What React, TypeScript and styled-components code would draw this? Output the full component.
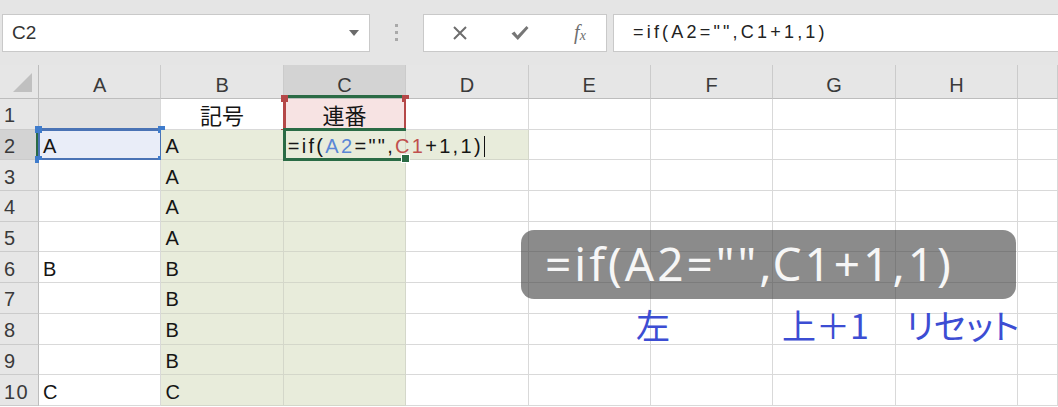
import styled, { createGlobalStyle } from 'styled-components';

const GlobalStyle = createGlobalStyle`
  html, body {
    margin: 0;
    padding: 0;
    background: #ffffff;
  }
  body {
    font-family: 'Liberation Sans', 'Noto Sans CJK JP', sans-serif;
  }
`;

const COLS = ['A', 'B', 'C', 'D', 'E', 'F', 'G', 'H', ''];
const SELECTED_COL = 'C';
const SELECTED_ROW = 2;

type Fill = 'none' | 'grey' | 'green' | 'blue' | 'pink';

const FILLS: Record<Fill, string> = {
  none: '#ffffff',
  grey: '#e2e2e2',
  green: '#e8ecdb',
  blue: '#e9edf8',
  pink: '#f7e3e3',
};

interface CellData {
  text?: string;
  fill?: Fill;
  big?: boolean;
  mark?: 'ref-blue' | 'ref-red' | 'active';
}

// sheet contents, keyed by "col+row"
const sheet: Record<string, CellData> = {
  A1: { fill: 'grey' },
  B1: { text: '記号', big: true },
  C1: { text: '連番', big: true, fill: 'pink', mark: 'ref-red' },
  A2: { text: 'A', fill: 'blue', mark: 'ref-blue' },
  B2: { text: 'A', fill: 'green' },
  C2: { fill: 'green', mark: 'active' },
  D2: { fill: 'green' },
  B3: { text: 'A' },
  B4: { text: 'A' },
  B5: { text: 'A' },
  A6: { text: 'B' },
  B6: { text: 'B' },
  B7: { text: 'B' },
  B8: { text: 'B' },
  B9: { text: 'B' },
  A10: { text: 'C' },
  B10: { text: 'C' },
};

const cellAt = (col: string, row: number): CellData => {
  const data = sheet[`${col}${row}`] ?? {};
  if ((col === 'B' || col === 'C') && row >= 2 && !data.fill) {
    return { ...data, fill: 'green' };
  }
  return data;
};

const App = () => {
  const rows = Array.from({ length: 10 }, (_, i) => i + 1);

  return (
    <>
      <GlobalStyle />
      <FrameS>
        <FormulaBarS>
          <NameBoxS>
            C2
            <CaretS />
          </NameBoxS>
          <GripS>
            <i />
            <i />
            <i />
          </GripS>
          <ButtonGroupS>
            <IconSlotS>
              <svg width='16' height='16' viewBox='0 0 16 16'>
                <path d='M2 2 L14 14 M14 2 L2 14' stroke='#6d6d6d' strokeWidth='2' fill='none' />
              </svg>
            </IconSlotS>
            <IconSlotS>
              <svg width='20' height='18' viewBox='0 0 20 18'>
                <path
                  d='M1.5 9.5 L4.5 7.5 L7.5 11.5 L16.5 2 L18.5 4 L7.8 16 Z'
                  fill='#767676'
                />
              </svg>
            </IconSlotS>
            <IconSlotS>
              <FxS>
                f<sub>x</sub>
              </FxS>
            </IconSlotS>
          </ButtonGroupS>
          <FormulaBoxS>=if(A2="",C1+1,1)</FormulaBoxS>
        </FormulaBarS>

        <GridS>
          <CornerS>
            <TriangleS />
          </CornerS>
          {COLS.map((c, i) => (
            <ColHeaderS key={`h${i}`} $selected={c === SELECTED_COL}>
              {c}
            </ColHeaderS>
          ))}

          {rows.map((r) => (
            <RowFragment key={r} row={r} />
          ))}
        </GridS>

        <BubbleS>=if(A2="",C1+1,1)</BubbleS>
        <NoteS $left={636}>左</NoteS>
        <NoteS $left={782}>上＋1</NoteS>
        <NoteS $left={906}>リセット</NoteS>
      </FrameS>
    </>
  );
};

export default App;

const RowFragment = ({ row }: { row: number }) => (
  <>
    <RowHeaderS $selected={row === SELECTED_ROW}>{row}</RowHeaderS>
    {COLS.map((col, i) => {
      const data = col ? cellAt(col, row) : {};
      return (
        <CellS
          key={`${row}-${i}`}
          $fill={data.fill ?? 'none'}
          $big={!!data.big}
          $editing={data.mark === 'active'}
        >
          {data.mark === 'active' ? <EditingText /> : data.text}
          {data.mark === 'ref-blue' && (
            <BlueRefS>
              <HandleS $c='#3f7ccc' $x='left' $y='top' />
              <HandleS $c='#3f7ccc' $x='right' $y='top' />
              <HandleS $c='#3f7ccc' $x='left' $y='bottom' />
              <HandleS $c='#3f7ccc' $x='right' $y='bottom' />
            </BlueRefS>
          )}
          {data.mark === 'ref-red' && (
            <RedRefS>
              <HandleS $c='#b54848' $x='left' $y='top' />
              <HandleS $c='#b54848' $x='right' $y='top' />
              <HandleS $c='#b54848' $x='left' $y='bottom' />
              <HandleS $c='#b54848' $x='right' $y='bottom' />
            </RedRefS>
          )}
          {data.mark === 'active' && (
            <ActiveS>
              <FillHandleS />
            </ActiveS>
          )}
        </CellS>
      );
    })}
  </>
);

const EditingText = () => (
  <EditTextS>
    =if(<RefS $c='#5a87d6'>A2</RefS>="",<RefS $c='#c0504d'>C1</RefS>+1,1)
    <CursorS />
  </EditTextS>
);

const FrameS = styled.div`
  position: relative;
  width: 1058px;
  height: 407px;
  overflow: hidden;
  background: #ffffff;
`;

const FormulaBarS = styled.div`
  display: flex;
  align-items: center;
  height: 65px;
  padding-left: 2px;
  box-sizing: border-box;
  background: #e5e5e5;
`;

const NameBoxS = styled.div`
  display: flex;
  align-items: center;
  justify-content: space-between;
  box-sizing: border-box;
  width: 368px;
  height: 38px;
  padding: 0 10px 0 9px;
  background: #ffffff;
  border: 1px solid #c9c9c9;
  font-size: 19px;
  color: #333;
`;

const CaretS = styled.span`
  width: 0;
  height: 0;
  border-left: 5px solid transparent;
  border-right: 5px solid transparent;
  border-top: 6px solid #6b6b6b;
`;

const GripS = styled.div`
  display: flex;
  flex-direction: column;
  align-items: center;
  gap: 4px;
  width: 53px;

  i {
    display: block;
    width: 3px;
    height: 3px;
    background: #a9a9a9;
  }
`;

const ButtonGroupS = styled.div`
  display: grid;
  grid-template-columns: repeat(3, 60px);
  align-items: center;
  box-sizing: border-box;
  width: 184px;
  height: 38px;
  padding-left: 6px;
  background: #ffffff;
  border: 1px solid #c9c9c9;
`;

const IconSlotS = styled.div`
  display: flex;
  align-items: center;
  justify-content: center;
`;

const FxS = styled.span`
  font-family: 'Liberation Serif', serif;
  font-style: italic;
  font-size: 20px;
  color: #6f6f6f;

  sub {
    font-size: 14px;
    vertical-align: -1px;
  }
`;

const FormulaBoxS = styled.div`
  display: flex;
  align-items: center;
  flex: 1;
  box-sizing: border-box;
  height: 38px;
  margin-left: 6px;
  padding-left: 19px;
  background: #ffffff;
  border: 1px solid #c9c9c9;
  border-right: none;
  font-size: 18px;
  letter-spacing: 3.2px;
  color: #222;
  white-space: nowrap;
`;

const GridS = styled.div`
  display: grid;
  grid-template-columns: 39px repeat(8, 122.4px) 1fr;
  grid-template-rows: 34px repeat(10, 30.7px);
`;

const CornerS = styled.div`
  display: flex;
  align-items: flex-end;
  justify-content: flex-end;
  padding: 0 6px 6px 0;
  background: #e6e6e6;
  border-right: 1px solid #bdbdbd;
  border-bottom: 1px solid #bdbdbd;
`;

const TriangleS = styled.span`
  width: 0;
  height: 0;
  border-left: 19px solid transparent;
  border-bottom: 19px solid #c0c0c0;
`;

const ColHeaderS = styled.div<{ $selected: boolean }>`
  display: flex;
  align-items: center;
  justify-content: center;
  padding-top: 7px;
  box-sizing: border-box;
  background: ${(p) => (p.$selected ? '#d3d3d3' : '#e6e6e6')};
  border-right: 1px solid #cbcbcb;
  border-bottom: 1px solid #bdbdbd;
  box-shadow: ${(p) => (p.$selected ? 'inset 0 -3px 0 #2a6b45' : 'none')};
  font-size: 20px;
  color: #3a3a3a;
`;

const RowHeaderS = styled.div<{ $selected: boolean }>`
  display: flex;
  align-items: center;
  padding: 4px 0 0 4px;
  box-sizing: border-box;
  background: ${(p) => (p.$selected ? '#d3d3d3' : '#e6e6e6')};
  border-right: 1px solid #bdbdbd;
  border-bottom: 1px solid #cbcbcb;
  box-shadow: ${(p) => (p.$selected ? 'inset -2px 0 0 #2a6b45' : 'none')};
  font-size: 20px;
  letter-spacing: 1.5px;
  color: #3a3a3a;
`;

const CellS = styled.div<{ $fill: Fill; $big: boolean; $editing: boolean }>`
  position: relative;
  z-index: ${(p) => (p.$editing ? 2 : 'auto')};
  display: flex;
  align-items: center;
  justify-content: ${(p) => (p.$big ? 'center' : 'flex-start')};
  box-sizing: border-box;
  padding: ${(p) => (p.$big ? '0' : '4px 0 0 4px')};
  background: ${(p) => FILLS[p.$fill]};
  border-right: 1px solid ${(p) => (p.$fill === 'green' ? '#d4d7ca' : '#d9d9d9')};
  border-bottom: 1px solid ${(p) => (p.$fill === 'green' ? '#d4d7ca' : '#d9d9d9')};
  font-family: ${(p) =>
    p.$big ? "'Noto Sans CJK JP', sans-serif" : "'Liberation Sans', 'Noto Sans CJK JP', sans-serif"};
  font-size: ${(p) => (p.$big ? '22px' : '20px')};
  color: #151515;
  white-space: nowrap;
`;

const EditTextS = styled.span`
  display: flex;
  align-items: center;
  letter-spacing: 2.3px;
`;

const RefS = styled.span<{ $c: string }>`
  color: ${(p) => p.$c};
`;

const CursorS = styled.i`
  display: block;
  width: 1px;
  height: 21px;
  margin-left: 1px;
  background: #111;
`;

const BlueRefS = styled.div`
  position: absolute;
  top: -2px;
  bottom: -2px;
  left: -1px;
  right: -2px;
  border: 3px solid #4a73b5;
  border-left-width: 2px;
  border-right-width: 2px;
`;

const RedRefS = styled.div`
  position: absolute;
  top: 1px;
  bottom: -2px;
  left: -1px;
  right: -2px;
  border-left: 3px solid #b54848;
  border-right: 3px solid #b54848;
`;

const ActiveS = styled.div`
  position: absolute;
  top: -2px;
  bottom: -2px;
  left: -1px;
  right: -1px;
  border: 3px solid #2a6b45;
  border-right: none;
`;

const HandleS = styled.span<{ $c: string; $x: 'left' | 'right'; $y: 'top' | 'bottom' }>`
  position: absolute;
  width: 7px;
  height: 7px;
  background: ${(p) => p.$c};
  ${(p) => p.$x}: -5px;
  ${(p) => p.$y}: -5px;
`;

const FillHandleS = styled.span`
  position: absolute;
  right: -4px;
  bottom: -5px;
  width: 7px;
  height: 7px;
  background: #2a6b45;
  border: 1px solid #ffffff;
`;

const BubbleS = styled.div`
  position: absolute;
  left: 521px;
  top: 230px;
  display: flex;
  align-items: center;
  box-sizing: border-box;
  width: 495px;
  height: 69px;
  padding: 0 0 4px 24px;
  border-radius: 13px;
  background: rgba(62, 62, 62, 0.6);
  font-family: 'Noto Sans', 'DejaVu Sans', sans-serif;
  font-size: 46px;
  letter-spacing: 3px;
  color: #f6f6f6;
  white-space: nowrap;
`;

const NoteS = styled.div<{ $left: number }>`
  position: absolute;
  left: ${(p) => p.$left}px;
  top: 303px;
  font-family: 'Noto Sans CJK JP', sans-serif;
  font-feature-settings: 'palt';
  font-size: 34px;
  line-height: 44px;
  color: #3c4dd3;
  white-space: nowrap;
`;
